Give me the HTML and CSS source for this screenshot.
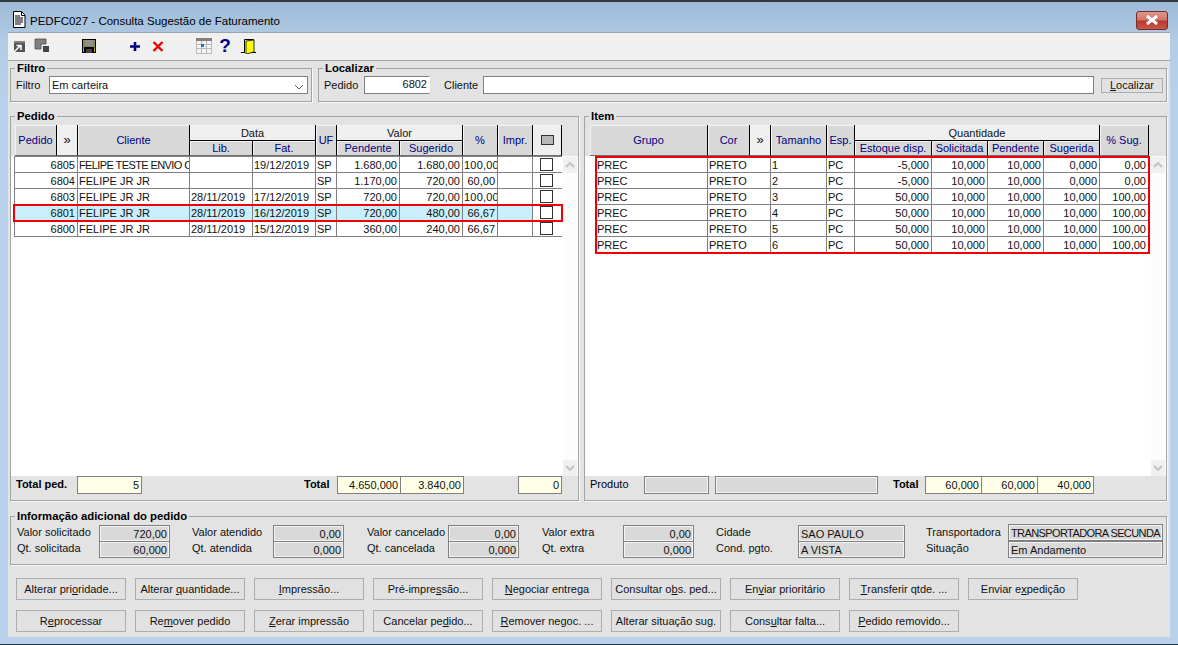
FILE: index.html
```html
<!DOCTYPE html>
<html lang="pt">
<head>
<meta charset="utf-8">
<title>PEDFC027 - Consulta Sugestão de Faturamento</title>
<link rel="stylesheet" href="styles.css">
</head>
<body>
<div class="window">
  <header class="titlebar">
    <svg class="doc-icon" width="14" height="17" viewBox="0 0 14 17"><path d="M1.500.5h8l3.500 3.500v12.500h-11.500z" fill="#fff" stroke="#000"/><path d="M9.500.5v4h3.500" fill="none" stroke="#000"/><path d="M3 5h5M3 7h8M3 9h8M3 11h8M3 13h6" stroke="#000" stroke-width="1.200"/></svg>
    <span class="title">PEDFC027 - Consulta Sugestão de Faturamento</span>
    <span class="close"><svg width="14" height="10" viewBox="0 0 14 10"><path d="M2 1l10 8M12 1l-10 8" stroke="#fff" stroke-width="3"/></svg></span>
  </header>
  <div class="client">
    <div class="toolbar">
      <svg class="ti ti1" width="16" height="16" viewBox="0 0 16 16"><rect x="3" y="3" width="11" height="11" fill="#555"/><rect x="3" y="3" width="11" height="2" fill="#808080"/><path d="M3 14l6-6M5.500 7.500H10V12" stroke="#fff" stroke-width="1.500" fill="none"/></svg>
      <svg class="ti ti2" width="16" height="16" viewBox="0 0 16 16"><path d="M1 1h11v5h-5v5H1z" fill="#808080" stroke="#444" stroke-width=".7"/><rect x="9" y="8" width="6" height="6" fill="#444"/></svg>
      <svg class="ti ti3" width="16" height="16" viewBox="0 0 16 16"><rect x="1" y="1" width="14" height="14" fill="#000"/><rect x="2" y="2" width="12" height="7" fill="#8a8a4a"/><rect x="4" y="2" width="8" height="6" fill="#8f8f8f"/><rect x="5" y="11" width="6" height="4" fill="#444"/><rect x="2" y="9" width="1" height="5" fill="#b5b500"/><rect x="13" y="9" width="1" height="5" fill="#b5b500"/></svg>
      <svg class="ti ti4" width="16" height="16" viewBox="0 0 16 16"><path d="M3 8.500h10M8 4v9" stroke="#000080" stroke-width="2.600"/></svg>
      <svg class="ti ti5" width="16" height="16" viewBox="0 0 16 16"><path d="M3.500 4l9 9M12.500 4l-9 9" stroke="#f00000" stroke-width="2.400"/></svg>
      <svg class="ti ti6" width="16" height="16" viewBox="0 0 16 16"><rect width="16" height="3" fill="#808080"/><rect y="3" width="16" height="13" fill="#f4f4f4"/><path d="M.5 3v13M5.500 3v13M10.500 3v13M15.500 3v13M0 6.500h16M0 10.500h16M0 15.500h16" stroke="#b8b8b8"/><rect x="5" y="6" width="3" height="3" fill="#1e78b4"/></svg>
      <span class="ti ti7">?</span>
      <svg class="ti ti8" width="16" height="16" viewBox="0 0 16 16"><path d="M0 14.500h4M10 14.500h5M3.500 14V1.500h9V14" fill="none" stroke="#000"/><path d="M5 3l8-1v12l-8 2z" fill="#ffff00" stroke="#000" stroke-width=".8"/></svg>
    </div>

    <div class="filters">
      <fieldset class="group filter-group">
        <legend>Filtro</legend>
        <div class="line">
          <span class="lbl-filtro">Filtro</span>
          <div class="field select-field"><span>Em carteira</span><svg width="10" height="6" viewBox="0 0 10 6"><path d="M1 1l4 4 4-4" fill="none" stroke="#606060"/></svg></div>
        </div>
      </fieldset>
      <fieldset class="group find-group">
        <legend>Localizar</legend>
        <div class="line">
          <span class="lbl-pedido">Pedido</span>
          <div class="field num-field">6802</div>
          <span class="lbl-cliente">Cliente</span>
          <div class="field client-field"></div>
          <div class="btn find-btn"><span><u>L</u>ocalizar</span></div>
        </div>
      </fieldset>
    </div>

    <div class="main">
      <fieldset class="group grid-group pedido">
        <legend>Pedido</legend>
        <table class="head head-pedido">
          <colgroup><col class="w42"><col class="w21"><col class="w112"><col class="w63"><col class="w63"><col class="w21"><col class="w63"><col class="w63"><col class="w35"><col class="w35"><col class="w29"></colgroup>
          <tr class="r1">
            <th rowspan="2">Pedido</th><th rowspan="2" class="plain arrows">»</th><th rowspan="2">Cliente</th>
            <th colspan="2" class="plain">Data</th><th rowspan="2">UF</th><th colspan="2" class="plain">Valor</th>
            <th rowspan="2">%</th><th rowspan="2">Impr.</th><th rowspan="2" class="plain"><span class="head-check"></span></th>
          </tr>
          <tr class="r2"><th>Lib.</th><th>Fat.</th><th>Pendente</th><th>Sugerido</th></tr>
        </table>
        <div class="sheet">
          <table class="rows rows-pedido">
            <colgroup><col class="w64"><col class="w112"><col class="w63"><col class="w63"><col class="w21"><col class="w63"><col class="w63"><col class="w35"><col class="w35"><col class="w29"></colgroup>
            <tr><td class="n first">6805</td><td class="tight">FELIPE TESTE ENVIO C</td><td></td><td>19/12/2019</td><td>SP</td><td class="n">1.680,00</td><td class="n">1.680,00</td><td class="clip">100,00</td><td></td><td class="chk"><span class="box"></span></td></tr>
            <tr><td class="n first">6804</td><td>FELIPE JR JR</td><td></td><td></td><td>SP</td><td class="n">1.170,00</td><td class="n">720,00</td><td class="n">60,00</td><td></td><td class="chk"><span class="box"></span></td></tr>
            <tr><td class="n first">6803</td><td>FELIPE JR JR</td><td>28/11/2019</td><td>17/12/2019</td><td>SP</td><td class="n">720,00</td><td class="n">720,00</td><td class="clip">100,00</td><td></td><td class="chk"><span class="box"></span></td></tr>
            <tr class="picked"><td class="n first">6801</td><td>FELIPE JR JR</td><td>28/11/2019</td><td>16/12/2019</td><td>SP</td><td class="n">720,00</td><td class="n">480,00</td><td class="n">66,67</td><td></td><td class="chk"><span class="box"></span></td></tr>
            <tr><td class="n first">6800</td><td>FELIPE JR JR</td><td>28/11/2019</td><td>15/12/2019</td><td>SP</td><td class="n">360,00</td><td class="n">240,00</td><td class="n">66,67</td><td></td><td class="chk"><span class="box"></span></td></tr>
          </table>
          <div class="scroll">
            <span class="sb"><svg width="10" height="6" viewBox="0 0 10 6"><path d="M1 5l4-4 4 4" fill="none" stroke="#c4c4c4" stroke-width="2"/></svg></span>
            <span class="sb"><svg width="10" height="6" viewBox="0 0 10 6"><path d="M1 1l4 4 4-4" fill="none" stroke="#c4c4c4" stroke-width="2"/></svg></span>
          </div>
        </div>
        <div class="totals">
          <b class="t-ped">Total ped.</b>
          <div class="val yellow v65">5</div>
          <b class="t-total">Total</b>
          <div class="val yellow v63">4.650,000</div>
          <div class="val yellow v64 joined">3.840,00</div>
          <div class="val yellow v44 zero">0</div>
        </div>
      </fieldset>

      <fieldset class="group grid-group item">
        <legend>Item</legend>
        <table class="head head-item">
          <colgroup><col class="w118"><col class="w42"><col class="w21"><col class="w56"><col class="w28"><col class="w77"><col class="w56"><col class="w56"><col class="w56"><col class="w49"></colgroup>
          <tr class="r1">
            <th rowspan="2">Grupo</th><th rowspan="2">Cor</th><th rowspan="2" class="plain arrows">»</th><th rowspan="2">Tamanho</th><th rowspan="2">Esp.</th>
            <th colspan="4" class="plain">Quantidade</th><th rowspan="2">% Sug.</th>
          </tr>
          <tr class="r2"><th>Estoque disp.</th><th>Solicitada</th><th>Pendente</th><th>Sugerida</th></tr>
        </table>
        <div class="sheet">
          <table class="rows rows-item">
            <colgroup><col class="w112"><col class="w63"><col class="w56"><col class="w28"><col class="w77"><col class="w56"><col class="w56"><col class="w56"><col class="w49"></colgroup>
            <tr><td>PREC</td><td>PRETO</td><td>1</td><td>PC</td><td class="n">-5,000</td><td class="n">10,000</td><td class="n">10,000</td><td class="n">0,000</td><td class="n">0,00</td></tr>
            <tr><td>PREC</td><td>PRETO</td><td>2</td><td>PC</td><td class="n">-5,000</td><td class="n">10,000</td><td class="n">10,000</td><td class="n">0,000</td><td class="n">0,00</td></tr>
            <tr><td>PREC</td><td>PRETO</td><td>3</td><td>PC</td><td class="n">50,000</td><td class="n">10,000</td><td class="n">10,000</td><td class="n">10,000</td><td class="n">100,00</td></tr>
            <tr><td>PREC</td><td>PRETO</td><td>4</td><td>PC</td><td class="n">50,000</td><td class="n">10,000</td><td class="n">10,000</td><td class="n">10,000</td><td class="n">100,00</td></tr>
            <tr><td>PREC</td><td>PRETO</td><td>5</td><td>PC</td><td class="n">50,000</td><td class="n">10,000</td><td class="n">10,000</td><td class="n">10,000</td><td class="n">100,00</td></tr>
            <tr><td>PREC</td><td>PRETO</td><td>6</td><td>PC</td><td class="n">50,000</td><td class="n">10,000</td><td class="n">10,000</td><td class="n">10,000</td><td class="n">100,00</td></tr>
          </table>
          <div class="scroll">
            <span class="sb"><svg width="10" height="6" viewBox="0 0 10 6"><path d="M1 5l4-4 4 4" fill="none" stroke="#c4c4c4" stroke-width="2"/></svg></span>
            <span class="sb"><svg width="10" height="6" viewBox="0 0 10 6"><path d="M1 1l4 4 4-4" fill="none" stroke="#c4c4c4" stroke-width="2"/></svg></span>
          </div>
        </div>
        <div class="totals">
          <span class="t-prod">Produto</span>
          <div class="val grey v65"></div>
          <div class="val grey v163"></div>
          <b class="t-total2">Total</b>
          <div class="val yellow v57">60,000</div>
          <div class="val yellow v56 joined">60,000</div>
          <div class="val yellow v57 joined">40,000</div>
        </div>
      </fieldset>
    </div>

    <fieldset class="group info">
      <legend>Informação adicional do pedido</legend>
      <div class="info-grid">
        <span>Valor solicitado</span><div class="val grey">720,00</div><i></i>
        <span>Valor atendido</span><div class="val grey">0,00</div><i></i>
        <span>Valor cancelado</span><div class="val grey">0,00</div><i></i>
        <span>Valor extra</span><div class="val grey">0,00</div><i></i>
        <span>Cidade</span><div class="val grey txt">SAO PAULO</div><i></i>
        <span>Transportadora</span><div class="val grey txt wide">TRANSPORTADORA SECUNDA</div>
        <span>Qt. solicitada</span><div class="val grey">60,000</div><i></i>
        <span>Qt. atendida</span><div class="val grey">0,000</div><i></i>
        <span>Qt. cancelada</span><div class="val grey">0,000</div><i></i>
        <span>Qt. extra</span><div class="val grey">0,000</div><i></i>
        <span>Cond. pgto.</span><div class="val grey txt">A VISTA</div><i></i>
        <span>Situação</span><div class="val grey txt">Em Andamento</div>
      </div>
    </fieldset>

    <div class="actions">
      <div class="btn">Alterar pri<u>o</u>ridade...</div>
      <div class="btn">Alterar&nbsp;<u>q</u>uantidade...</div>
      <div class="btn"><u>I</u>mpressão...</div>
      <div class="btn">Pré-impre<u>s</u>são...</div>
      <div class="btn"><u>N</u>egociar entrega</div>
      <div class="btn">Consultar o<u>b</u>s. ped...</div>
      <div class="btn">En<u>v</u>iar prioritário</div>
      <div class="btn"><u>T</u>ransferir qtde. ...</div>
      <div class="btn">Enviar e<u>x</u>pedição</div>
      <div class="btn">R<u>e</u>processar</div>
      <div class="btn">Re<u>m</u>over pedido</div>
      <div class="btn"><u>Z</u>erar impressão</div>
      <div class="btn">Cancelar pe<u>d</u>ido...</div>
      <div class="btn"><u>R</u>emover negoc. ...</div>
      <div class="btn">Alterar situação su<u>g</u>.</div>
      <div class="btn">Cons<u>u</u>ltar falta...</div>
      <div class="btn"><u>P</u>edido removido...</div>
    </div>
  </div>
</div>
</body>
</html>
```

FILE: styles.css
```css
* { box-sizing: border-box; }
html, body { margin: 0; padding: 0; }
body {
  width: 1178px;
  height: 645px;
  overflow: hidden;
  font: 11px/14px "Liberation Sans", Arial, sans-serif;
  color: #111;
  background: #b9d1ea;
}
.window {
  width: 1178px;
  height: 645px;
  display: flex;
  flex-direction: column;
  padding: 0 8px 7px;
  border-top: 2px solid #34383c;
  border-bottom: 1px solid #1c3c44;
  background: linear-gradient(#9dbad7 0, #b3cce4 40px, #b9d1ea 100px);
}
.titlebar {
  height: 30px;
  flex: none;
  display: flex;
  align-items: center;
}
.doc-icon { margin: 5px 0 0 4px; }
.title {
  margin: 7px 0 0 4px;
  font-size: 11.500px;
  color: #000;
}
.close {
  margin: 6px 2px 0 auto;
  width: 32px;
  height: 19px;
  display: flex;
  align-items: center;
  justify-content: center;
  border: 1px solid #7a2a22;
  border-radius: 3px;
  background: linear-gradient(#dc9a8e 0, #d0766a 45%, #b8392a 55%, #c8584a 100%);
}
.client {
  flex: 1;
  display: flex;
  flex-direction: column;
  padding: 0 3px 0 2px;
  background: #e3e3e3;
  border-top: 1px solid #9aa4ac;
}
.toolbar {
  height: 28px;
  flex: none;
  margin: 0 -3px 0 -2px;
  display: flex;
  align-items: center;
  padding: 0 0 1px 0;
  background: #f0f0f0;
  border-bottom: 1px solid #a0a0a0;
}
.ti { flex: none; display: block; }
.ti1 { margin-left: 3px; }
.ti2 { margin-left: 7px; margin-top: -1px; }
.ti3 { margin-left: 31px; }
.ti4 { margin-left: 30px; }
.ti5 { margin-left: 7px; }
.ti6 { margin-left: 30px; margin-top: -1px; }
.ti7 {
  margin-left: 7px;
  width: 12px;
  font: bold 19px/16px "Liberation Sans", Arial, sans-serif;
  color: #000080;
  text-align: center;
}
.ti8 { margin-left: 10px; margin-top: -1px; }

.group {
  margin: 0;
  padding: 0;
  min-width: 0;
  border: 1px solid #a3a3a3;
  box-shadow: 1px 1px 0 #f8f8f8;
}
.group legend {
  margin-left: 4px;
  padding: 0 2px;
  font-weight: bold;
  font-size: 11.300px;
  line-height: 14px;
  color: #000;
}
.filters { display: flex; gap: 6px; height: 41px; flex: none; }
.filter-group { width: 302px; }
.find-group { width: 849px; }
.line { display: flex; align-items: center; height: 18px; margin-top: 1px; padding-left: 5px; }
.lbl-filtro { width: 33px; padding-bottom: 1px; }
.lbl-pedido { width: 40px; padding-bottom: 1px; }
.lbl-cliente { margin-left: 14px; width: 39px; padding-bottom: 1px; }
.field {
  height: 18px;
  background: #fff;
  border: 1px solid #808080;
  line-height: 14px;
  padding: 0 2px;
}
.select-field {
  width: 259px;
  display: flex;
  align-items: center;
  justify-content: space-between;
  padding-right: 3px;
}
.select-field span { padding-bottom: 1px; }
.select-field svg { margin-top: 4px; }
.num-field { width: 66px; text-align: right; border-right-color: #fff; }
.client-field { width: 611px; }
.btn {
  display: flex;
  align-items: center;
  justify-content: center;
  background: #e1e1e1;
  border: 1px solid #adadad;
  white-space: nowrap;
}
.find-btn { margin-left: 7px; width: 62px; height: 15px; }

.main { display: flex; gap: 5px; height: 392px; margin-top: 7px; flex: none; }
.grid-group { display: flex; flex-direction: column; padding-top: 2px; }
.pedido { width: 569px; }
.item { width: 583px; }
table { border-collapse: separate; border-spacing: 0; table-layout: fixed; flex: none; }
.head th {
  padding: 0;
  font-weight: normal;
  background: #d8d8d8;
  color: #000080;
  border-right: 1px solid #000;
  border-bottom: 1px solid #707070;
  box-shadow: inset 1px 1px 0 #f4f4f4;
  overflow: hidden;
  white-space: nowrap;
}
.head .plain { background: #efefef; color: #111; }
.head .r1 { height: 16px; }
.head .r2 { height: 15px; }
.head .r1 .plain[colspan] { border-bottom-color: #000; }
.head-pedido { width: 547px; margin-left: 4px; }
.head-item { width: 559px; margin-left: 5px; }
.arrows { font-size: 13px; }
.head-check {
  display: block;
  width: 13px;
  height: 10px;
  margin: 0 auto;
  background: #b8b8b8;
  border: 1px solid #333;
}
.w21 { width: 21px; } .w28 { width: 28px; } .w29 { width: 29px; } .w35 { width: 35px; }
.w42 { width: 42px; } .w49 { width: 49px; } .w56 { width: 56px; } .w63 { width: 63px; }
.w64 { width: 64px; } .w77 { width: 77px; } .w112 { width: 112px; } .w118 { width: 118px; }

.sheet {
  flex: 1;
  display: flex;
  align-items: flex-start;
  background: #fff;
  min-height: 0;
}
.rows td {
  height: 16px;
  padding: 0 1px;
  border-right: 1px solid #808080;
  border-bottom: 1px solid #808080;
  overflow: hidden;
  white-space: nowrap;
  color: #111;
  line-height: 14px;
}
.rows .n { text-align: right; padding-right: 2px; }
.rows .clip { letter-spacing: .2px; }
.rows .tight { letter-spacing: -.6px; }
.rows-pedido { width: 548px; margin-left: 3px; border-top: 1px solid #808080; }
.rows-pedido td.first { border-left: 1px solid #808080; }
.rows-pedido td.chk { border-right: 0; padding: 0; }
.rows-item { width: 553px; margin: 1px 0 0 11px; outline: 2px solid #f00000; outline-offset: -1px; }
.picked td { background: #c9eefc; }
.picked td.chk { background: #fff; }
.picked { outline: 2px solid #f00000; outline-offset: -1px; }
.box {
  display: block;
  width: 13px;
  height: 13px;
  margin: 0 0 0 7px;
  background: #fff;
  border: 1px solid #333;
}
.scroll {
  align-self: stretch;
  width: 14px;
  margin-left: auto;
  margin-right: 1px;
  display: flex;
  flex-direction: column;
  justify-content: space-between;
  padding-top: 1px;
  background: #fcfcfc;
}
.sb {
  height: 16px;
  display: flex;
  align-items: center;
  justify-content: center;
  background: #f0f0f0;
}
.totals { height: 24px; flex: none; display: flex; align-items: flex-start; }
.totals b, .t-prod { line-height: 16px; color: #000; }
.t-ped { margin-left: 5px; width: 61px; }
.t-total { margin-left: 162px; width: 33px; }
.t-prod { margin-left: 5px; width: 54px; }
.t-total2 { margin-left: 15px; width: 32px; }
.val {
  height: 18px;
  border: 1px solid #808080;
  text-align: right;
  padding: 0 2px;
  line-height: 16px;
  overflow: hidden;
  white-space: nowrap;
}
.yellow { background: #ffffe8; }
.grey { background: #d9d9d9; box-shadow: inset 1px 1px 0 #f4f4f4, inset -1px -1px 0 #f4f4f4; }
.joined { margin-left: -1px; }
.v44 { width: 44px; }
.v56 { width: 57px; }
.v57 { width: 57px; }
.v63 { width: 64px; }
.v64 { width: 64px; }
.v65 { width: 65px; }
.v163 { width: 163px; margin-left: 6px; }
.zero { margin-left: 54px; }

.info { height: 56px; margin-top: 8px; flex: none; }
.info-grid {
  display: grid;
  grid-template-columns: 82px 71px 22px 81px 71px 23px 81px 71px 23px 81px 71px 22px 82px 107px 21px 82px 155px;
  grid-auto-rows: 16px;
  padding: 2px 0 0 6px;
  line-height: 14px;
}
.info-grid span { white-space: nowrap; }
.info-grid .val { height: 17px; margin-bottom: -1px; }
.txt { text-align: left; }
.wide { margin-top: -1px; letter-spacing: -.6px; }

.actions {
  display: grid;
  grid-template-columns: repeat(9, 110px);
  grid-auto-rows: 22px;
  gap: 10px 9px;
  margin: 13px 0 0 6px;
}
```
